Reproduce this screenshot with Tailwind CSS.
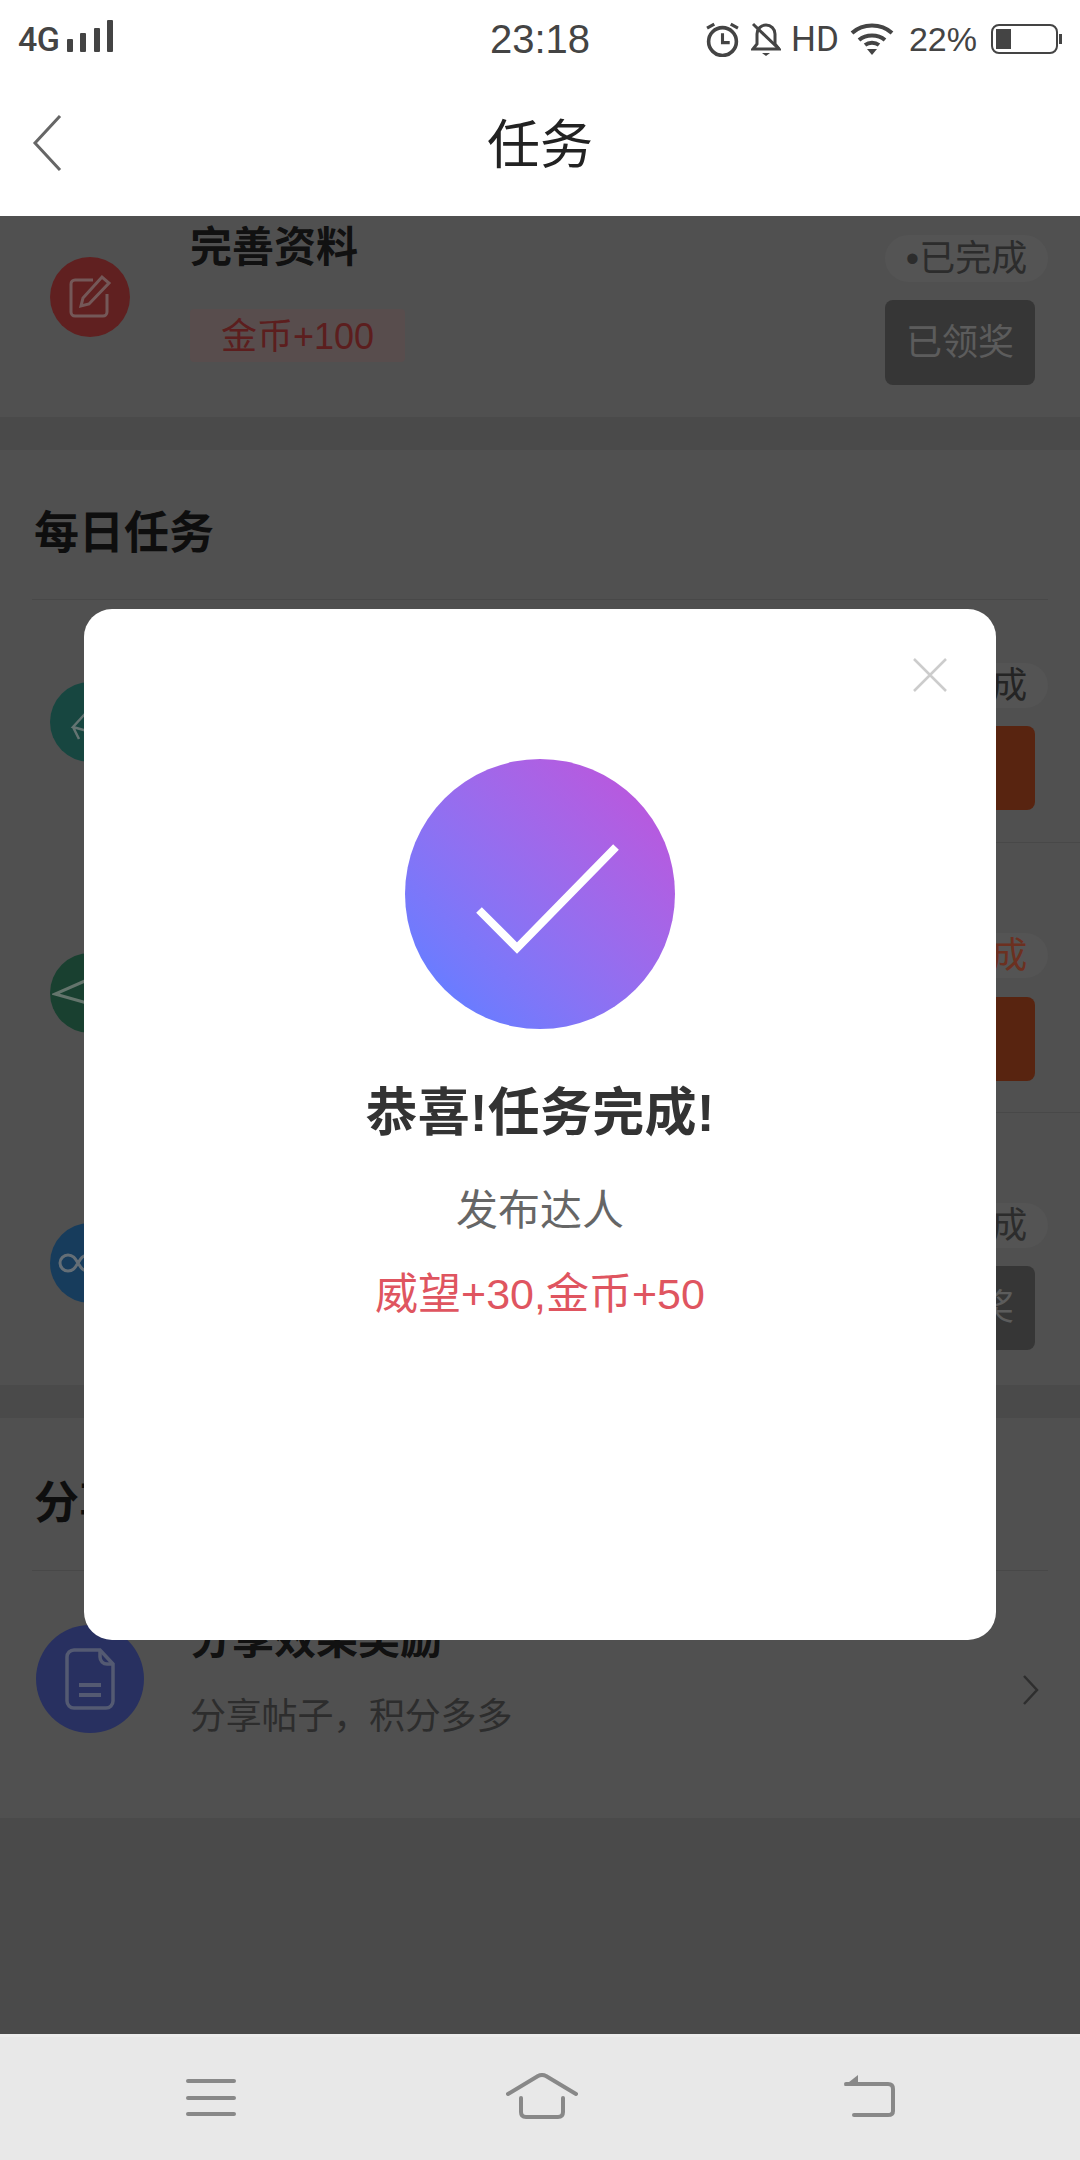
<!DOCTYPE html>
<html lang="zh-CN">
<head>
    <meta charset="UTF-8">
    <meta name="viewport" content="width=device-width, initial-scale=1.0">
    <title>任务</title>
    <script src="https://cdn.jsdelivr.net/npm/@tailwindcss/browser@4"></script>
</head>
<body>
<div class="w-[1080px] h-[2160px] flex flex-col overflow-hidden bg-white font-['Liberation_Sans','Noto_Sans_CJK_SC',sans-serif]">

    <!-- status bar -->
    <div class="h-[70px] shrink-0 grid grid-cols-[1fr_auto_1fr] items-center px-[18px] pt-[8px] text-[#444]">
        <div class="flex items-center">
            <span class="text-[34px] leading-none tracking-[-0.5px] font-['Roboto'] font-medium">4G</span>
            <svg class="ml-[7px] -mt-[6px]" width="48" height="34" viewBox="0 0 48 34" fill="#444">
                <rect x="1" y="20" width="6" height="13" rx="1"/><rect x="14" y="14" width="6" height="19" rx="1"/><rect x="28" y="9" width="6" height="24" rx="1"/><rect x="41" y="1" width="6" height="32" rx="1"/>
            </svg>
        </div>
        <div class="text-[40px] leading-none">23:18</div>
        <div class="flex items-center justify-end">
            <svg width="35" height="35" viewBox="0 0 34 34" fill="none" stroke="#444" stroke-width="3.5">
                <circle cx="17" cy="19" r="13.5"/><path d="M17 11v9h7" stroke-width="3"/><path d="M2 6l7-4M32 6l-7-4" stroke-width="3"/>
            </svg>
            <svg class="ml-[11px]" width="30" height="35" viewBox="0 0 30 35" fill="none" stroke="#444" stroke-width="3">
                <path d="M2 27h26l-4-5V12c0-5-4-9-9-9S6 7 6 12v10z"/><path d="M2 2l26 25"/><path d="M11 31h8l-4 3z" fill="#444" stroke="none"/>
            </svg>
            <span class="ml-[10px] text-[35px] leading-none font-['Roboto']">HD</span>
            <svg class="ml-[11px]" width="44" height="32" viewBox="0 0 44 32" fill="none" stroke="#444" stroke-width="4">
                <path d="M2 10c11-10 29-10 40 0M9 17c7-6 19-6 26 0"/><path d="M15 22c4-3 10-3 14 0" /><path d="M17 26h10l-5 6z" fill="#444" stroke="none"/>
            </svg>
            <span class="ml-[15px] text-[34px] leading-none">22%</span>
            <svg class="ml-[14px]" width="71" height="30" viewBox="0 0 71 30">
                <rect x="1" y="1" width="65" height="28" rx="7" fill="none" stroke="#444" stroke-width="2"/>
                <rect x="5" y="5" width="15" height="20" fill="#444"/>
                <rect x="68" y="10" width="3" height="10" fill="#444"/>
            </svg>
        </div>
    </div>

    <!-- nav bar -->
    <div class="h-[146px] shrink-0 grid grid-cols-[1fr_auto_1fr] items-center pl-[32px]">
        <svg width="30" height="56" viewBox="0 0 30 56" fill="none" stroke="#666" stroke-width="3"><path d="M28 1L3 28l25 27"/></svg>
        <h1 class="text-[53px] leading-none text-[#222] -ml-[32px] pt-[5px]">任务</h1>
        <div></div>
    </div>

    <!-- page under the dialog -->
    <div class="relative flex-1 bg-[#949494] overflow-hidden">

        <div class="h-[201px] bg-[#a0a0a0] flex items-start pl-[50px]">
            <div class="mt-[41px] w-[80px] h-[80px] rounded-full bg-[#c04040] flex items-center justify-center">
                <svg width="46" height="46" viewBox="0 0 46 46" fill="none" stroke="#e8b0b0" stroke-width="3">
                    <path d="M26 6H8a4 4 0 0 0-4 4v28a4 4 0 0 0 4 4h28a4 4 0 0 0 4-4V20"/><path d="M16 24L35 3l7 6-20 21-8 2z"/>
                </svg>
            </div>
            <div class="ml-[60px] pt-[11px]">
                <h3 class="text-[42px] leading-[42px] font-bold text-[#222]">完善资料</h3>
                <span class="mt-[40px] h-[53px] w-[215px] pt-[2px] flex items-center justify-center rounded-[4px] bg-[#b09a9a] text-[36px] text-[#b83c3c]">金币+100</span>
            </div>
            <div class="ml-auto mr-[32px] w-[163px] pt-[19px]">
                <div class="h-[47px] rounded-full bg-[#a8a8a8] flex items-center justify-center text-[36px] text-[#585858]"><span class="text-[38px] leading-none">•</span>已完成</div>
                <div class="mt-[18px] w-[150px] h-[85px] rounded-[8px] bg-[#6c6c6c] flex items-center justify-center text-[36px] text-[#b8b8b8]">已领奖</div>
            </div>
        </div>

        <section class="mt-[33px] bg-[#a0a0a0]">
            <div class="h-[150px] mx-[32px] pt-[18px] px-[2px] flex items-center border-b border-[#909090]">
                <h2 class="text-[45px] leading-none font-bold text-[#1c1c1c]">每日任务</h2>
            </div>

            <div class="h-[242px] flex items-start pl-[50px] pt-[63px]">
                <div class="mt-[19px] w-[80px] h-[80px] rounded-full bg-[#2e8c80] flex items-center justify-center">
                    <svg class="ml-[6px]" width="68" height="46" viewBox="0 0 68 46" fill="none" stroke="#c8e8e4" stroke-width="2.5"><path d="M14 28l22-24 14 20-22 8zM14 28l6 12"/></svg>
                </div>
                <div class="ml-auto mr-[32px] w-[163px]">
                    <div class="h-[45px] rounded-full bg-[#a8a8a8] flex items-center justify-center text-[36px] text-[#484848]"><span class="text-[38px] leading-none">•</span>已完成</div>
                    <div class="mt-[18px] w-[150px] h-[84px] rounded-[8px] bg-[#b04820]"></div>
                </div>
            </div>
            <div class="ml-[190px] h-px bg-[#909090]"></div>

            <div class="h-[269px] flex items-start pl-[50px] pt-[90px]">
                <div class="mt-[20px] w-[80px] h-[80px] rounded-full bg-[#328060] flex items-center justify-center">
                    <svg width="76" height="46" viewBox="0 0 76 46" fill="none" stroke="#c8e8d8" stroke-width="3"><path d="M42 7L3 24l39 11"/></svg>
                </div>
                <div class="ml-auto mr-[32px] w-[163px]">
                    <div class="h-[45px] rounded-full bg-[#a8a8a8] flex items-center justify-center text-[36px] text-[#d86040]"><span class="text-[38px] leading-none">•</span>已完成</div>
                    <div class="mt-[19px] w-[150px] h-[84px] rounded-[8px] bg-[#b04820]"></div>
                </div>
            </div>
            <div class="ml-[190px] h-px bg-[#909090]"></div>

            <div class="h-[272px] flex items-start pl-[50px] pt-[90px]">
                <div class="mt-[20px] w-[80px] h-[80px] rounded-full bg-[#2e78b8] flex items-center justify-center">
                    <svg width="72" height="24" viewBox="0 0 72 24" fill="none" stroke="#c8dcec" stroke-width="3"><path d="M24 12c-3-5-5-8-10-8a8 8 0 0 0 0 16c5 0 7-3 10-8s5-8 10-8a8 8 0 0 1 0 16c-5 0-7-3-10-8z"/></svg>
                </div>
                <div class="ml-auto mr-[32px] w-[163px]">
                    <div class="h-[45px] rounded-full bg-[#a8a8a8] flex items-center justify-center text-[36px] text-[#585858]"><span class="text-[38px] leading-none">•</span>已完成</div>
                    <div class="mt-[18px] w-[150px] h-[84px] rounded-[8px] bg-[#6c6c6c] flex items-center justify-center text-[36px] text-[#b8b8b8]">去领奖</div>
                </div>
            </div>
        </section>

        <section class="mt-[33px] bg-[#a0a0a0]">
            <div class="h-[153px] mx-[32px] pt-[18px] px-[2px] flex items-center border-b border-[#909090]">
                <h2 class="text-[45px] leading-none font-bold text-[#1c1c1c]">分享任务</h2>
            </div>
            <div class="h-[247px] flex items-start pl-[36px] pt-[54px]">
                <div class="w-[108px] h-[108px] rounded-full bg-[#5060c0] flex items-center justify-center">
                    <svg width="50" height="62" viewBox="0 0 50 62" fill="none" stroke="#a8b4e4" stroke-width="3.5">
                        <path d="M35 2H9a7 7 0 0 0-7 7v44a7 7 0 0 0 7 7h32a7 7 0 0 0 7-7V16z"/><path d="M35 2v7a7 7 0 0 0 7 7h6"/><path d="M14 37h22M14 47h22" stroke-width="4"/>
                    </svg>
                </div>
                <div class="ml-[46px] -mt-[6px]">
                    <h3 class="text-[42px] leading-[42px] font-bold text-[#222]">分享效果奖励</h3>
                    <p class="mt-[34px] text-[36px] leading-[44px] tracking-[-0.2px] text-[#5a5a5a]">分享帖子，积分多多</p>
                </div>
                <svg class="ml-auto mr-[41px] mt-[50px]" width="16" height="30" viewBox="0 0 16 30" fill="none" stroke="#5c5c5c" stroke-width="2.5"><path d="M1 1l13 14L1 29"/></svg>
            </div>
        </section>

        <!-- dialog over the dimmed page -->
        <div class="absolute inset-0 bg-black/50 flex items-center justify-center pb-[1px]">
            <div class="relative w-[912px] h-[1031px] rounded-[28px] bg-white flex flex-col items-center pt-[150px]">
                <svg class="absolute top-[49px] right-[49px]" width="34" height="34" viewBox="0 0 34 34" fill="none" stroke="#ccc" stroke-width="2.5"><path d="M1 1l32 32M33 1L1 33"/></svg>
                <div class="w-[270px] h-[270px] rounded-full bg-linear-to-tr from-[#6a7cff] from-15% to-[#b65adf] to-85% flex items-center justify-center">
                    <svg width="270" height="270" viewBox="0 0 270 270" fill="none" stroke="#fff" stroke-width="8"><path d="M74 151l38 38 99-101"/></svg>
                </div>
                <h2 class="mt-[54px] text-[52px] leading-[60px] font-bold text-[#333] tracking-[0.3px]">恭喜!任务完成!</h2>
                <p class="mt-[43px] text-[42px] leading-[50px] text-[#666]">发布达人</p>
                <p class="mt-[33px] text-[43px] leading-[50px] text-[#df5560]">威望+30,金币+50</p>
            </div>
        </div>
    </div>

    <!-- system navigation -->
    <div class="h-[126px] shrink-0 bg-[#e8e8e8] border-t-[3px] border-[#ececec] relative flex items-start">
        <svg class="ml-[186px] mt-[41px]" width="50" height="38" viewBox="0 0 50 38" fill="none" stroke="#888" stroke-width="4" stroke-linecap="round"><path d="M2 3h46M2 20h46M2 36h46"/></svg>
        <svg class="ml-[270px] mt-[36px]" width="72" height="46" viewBox="0 0 72 46" fill="none" stroke="#888" stroke-width="4" stroke-linecap="round" stroke-linejoin="round"><path d="M2 21L32 3q4-2 8 0l30 18"/><path d="M15 25v14q0 5 5 5h32q5 0 5-5V25"/></svg>
        <svg class="ml-[264px] mt-[37px]" width="54" height="44" viewBox="0 0 54 44" fill="none" stroke="#888" stroke-width="4" stroke-linecap="round" stroke-linejoin="round"><path d="M4 10h42q5 0 5 5v22q0 4-5 4H12"/><path d="M16 1v11H2z" fill="#888" stroke="none"/></svg>
    </div>
</div>
</body>
</html>
